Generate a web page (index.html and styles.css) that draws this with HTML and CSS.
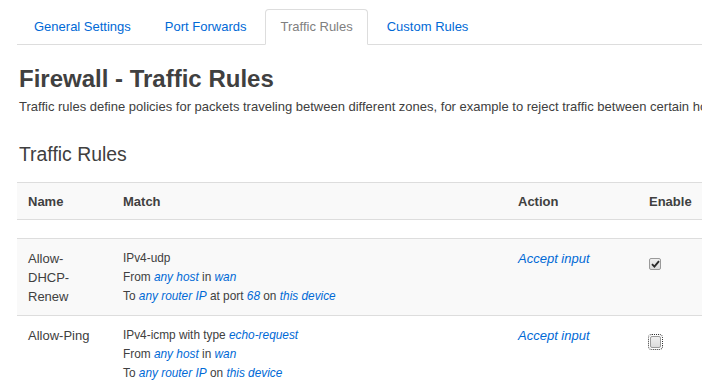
FILE: index.html
```html
<!DOCTYPE html>
<html lang="en">
<head>
    <meta charset="UTF-8">
    <title>Firewall - Traffic Rules</title>
    <link rel="stylesheet" href="styles.css">
</head>
<body>
    <div class="page">
        <ul class="tabs">
            <li><a href="#">General Settings</a></li>
            <li><a href="#">Port Forwards</a></li>
            <li class="active"><a href="#">Traffic Rules</a></li>
            <li><a href="#">Custom Rules</a></li>
        </ul>

        <h2 class="map-title">Firewall - Traffic Rules</h2>
        <div class="map-descr">Traffic rules define policies for packets traveling between different zones, for example to reject traffic between certain hosts or to open WAN ports on the router.</div>

        <h3 class="section-title">Traffic Rules</h3>
        <table class="rules">
            <colgroup>
                <col class="col-name">
                <col class="col-match">
                <col class="col-action">
                <col class="col-enable">
            </colgroup>
            <tr class="titles">
                <th>Name</th>
                <th>Match</th>
                <th>Action</th>
                <th>Enable</th>
            </tr>
            <tr class="spacer">
                <td colspan="4"></td>
            </tr>
            <tr class="row-odd">
                <td>Allow-DHCP-Renew</td>
                <td class="match">
                    IPv4-udp<br>
                    From <a href="#">any host</a> in <a href="#">wan</a><br>
                    To <a href="#">any router IP</a> at port <a href="#">68</a> on <a href="#">this device</a>
                </td>
                <td><a href="#">Accept input</a></td>
                <td><span class="check checked"><svg width="9" height="8" viewBox="0 0 9 8"><path d="M1 4.2 L3.4 6.6 L8 1.2" fill="none" stroke="#2b2b2b" stroke-width="1.9"/></svg></span></td>
            </tr>
            <tr class="row-even">
                <td>Allow-Ping</td>
                <td class="match">
                    IPv4-icmp with type <a href="#">echo-request</a><br>
                    From <a href="#">any host</a> in <a href="#">wan</a><br>
                    To <a href="#">any router IP</a> on <a href="#">this device</a>
                </td>
                <td><a href="#">Accept input</a></td>
                <td><span class="check focused"></span></td>
            </tr>
        </table>
    </div>
</body>
</html>
```

FILE: styles.css
```css
html, body {
    overflow: hidden;
}

body {
    margin: 0;
    font-family: "Liberation Sans", Arial, sans-serif;
    font-size: 13px;
    line-height: 19px;
    color: #404040;
    background: #fff;
}

a {
    color: #0069d6;
    text-decoration: none;
}

.page {
    width: 1000px;
    padding-left: 17px;
}

/* tabs */
.tabs {
    display: flex;
    list-style: none;
    margin: 9px 0 0 0;
    padding: 0;
    border-bottom: 1px solid #ddd;
}

.tabs li {
    margin: 0 2px -1px 2px;
}

.tabs a {
    display: block;
    padding: 7px 14px 7px 14px;
    line-height: 20px;
    border: 1px solid transparent;
    border-radius: 4px 4px 0 0;
}

.tabs .active a {
    color: #808080;
    background: #fff;
    border-color: #ddd #ddd transparent #ddd;
}

/* headings */
.map-title {
    margin: 21px 0 0 2px;
    font-size: 24px;
    line-height: 26px;
    font-weight: bold;
    color: #404040;
}

.map-descr {
    margin: 6px 0 0 2px;
    font-size: 13px;
    line-height: 18px;
    white-space: nowrap;
}

.section-title {
    margin: 26px 0 0 2px;
    font-size: 19.4px;
    line-height: 24px;
    font-weight: normal;
    color: #404040;
}

/* table */
.rules {
    margin-top: 16px;
    width: 760px;
    border-collapse: collapse;
    table-layout: fixed;
}

.col-name { width: 95px; }
.col-match { width: 395px; }
.col-action { width: 131px; }
.col-enable { width: 139px; }

.rules th,
.rules td {
    text-align: left;
    vertical-align: top;
    border-top: 1px solid #ddd;
    padding: 10px 11px 9px 11px;
}

.rules th {
    padding: 9px 11px 8px 11px;
    font-weight: bold;
}

.rules .titles {
    background: #f9f9f9;
}

.rules .spacer td {
    padding: 0;
    height: 18px;
}

.rules .row-odd {
    background: #f9f9f9;
}

.rules td.match {
    font-size: 11.85px;
}

.rules td a {
    font-style: italic;
}

/* checkboxes */
.check {
    display: inline-block;
    box-sizing: border-box;
    width: 12px;
    height: 12px;
    margin: 9px 0 0 0;
    border: 1px solid #9a9a9a;
    border-radius: 2px;
    background: linear-gradient(#f0f0f0, #dcdcdc);
    position: relative;
}

.check svg {
    position: absolute;
    left: 1px;
    top: 1px;
}

.check.focused {
    width: 11px;
    height: 12px;
    margin: 10px 0 0 1px;
    outline: 1px dotted #333;
    outline-offset: 1px;
}
```
